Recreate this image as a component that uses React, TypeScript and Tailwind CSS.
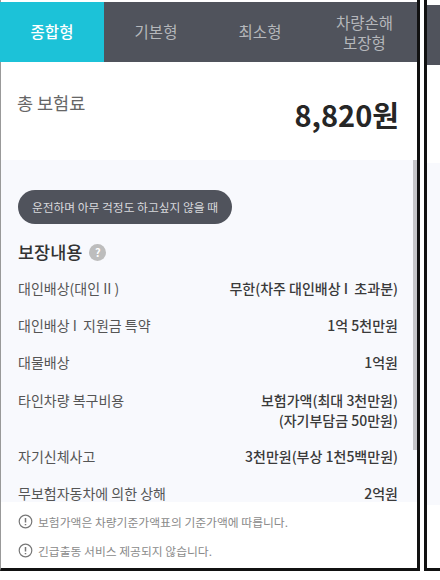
const font = { fontFamily: '"Noto Sans CJK KR", "Noto Sans", sans-serif' };

function Row({ label, value, h = "h-[37px]" }: { label: string; value: React.ReactNode; h?: string }) {
  return (
    <div className={`flex justify-between ${h} text-[14px] leading-[20px] shrink-0`}>
      <span className="text-[#555] whitespace-pre">{label}</span>
      <span className="text-right font-medium text-[#3a3a3a] whitespace-pre">{value}</span>
    </div>
  );
}

function Info({ text }: { text: string }) {
  return (
    <div className="flex items-center gap-[5px] h-[29px] text-[11.8px] text-[#8a8a8a]">
      <svg width="15" height="15" viewBox="0 0 15 15" fill="none" stroke="#777" strokeWidth="1.2">
        <circle cx="7.5" cy="7.5" r="6.3" />
        <path d="M7.5 4v4.6M7.5 10v1.2" strokeWidth="1.5" />
      </svg>
      <span>{text}</span>
    </div>
  );
}

export default function App() {
  return (
    <div className="w-[440px] h-[580px] bg-white overflow-hidden flex" style={font}>
      <div className="w-[420px] h-[571px] shrink-0 border-r-[3px] border-b-[3px] border-[#111] flex flex-col pt-[2px] border-l border-l-[#999]">
        <div className="flex h-[60px] shrink-0 text-[15.5px] text-[#b5b7bb] bg-[#50535c]">
          <div className="w-[104px] -ml-px flex items-center justify-center bg-[#1cc2d8] text-white font-medium">종합형</div>
          <div className="w-[104px] flex items-center justify-center">기본형</div>
          <div className="w-[104px] flex items-center justify-center">최소형</div>
          <div className="flex-1 flex items-center justify-center text-center leading-[20px]">차량손해<br />보장형</div>
        </div>
        <div className="h-[98px] shrink-0 flex justify-between pl-[16px] pr-[18px] pt-[28px]">
          <span className="text-[17.5px] text-[#666] leading-[26px]">총 보험료</span>
          <span className="text-[29px] font-bold text-[#262626] leading-[40px] pt-[4px]">8,820원</span>
        </div>
        <div className="flex-1 min-h-0 bg-[#f8f9fd] overflow-hidden flex relative">
          <div className="flex-1 pl-[17px] pr-[19px] pt-[30px] overflow-hidden">
            <div className="w-[214px] h-[34px] rounded-full bg-[#50535c] text-[#d8d9dc] text-[11.75px] flex items-center justify-center">
              운전하며 아무 걱정도 하고싶지 않을 때
            </div>
            <div className="flex items-center gap-[7px] mt-[13px] h-[30px] text-[17.5px] font-medium text-[#333]">
              보장내용
              <span className="w-[17px] h-[17px] rounded-full bg-[#bdbdbd] text-white text-[11px] font-bold flex items-center justify-center">?</span>
            </div>
            <div className="mt-[11px]">
              <Row label="대인배상(대인 II )" value="무한(차주 대인배상 I  초과분)" />
              <Row label="대인배상 I  지원금 특약" value="1억 5천만원" />
              <Row label="대물배상" value="1억원" h="h-[38px]" />
              <Row label="타인차량 복구비용" value={<>보험가액(최대 3천만원)<br />(자기부담금 50만원)</>} h="h-[56px]" />
              <Row label="자기신체사고" value="3천만원(부상 1천5백만원)" />
              <Row label="무보험자동차에 의한 상해" value="2억원" />
            </div>
          </div>
          <div className="absolute right-0 top-0 w-[4px] h-[290px] bg-[#c4c4c8]" />
        </div>
        <div className="h-[66px] shrink-0 bg-white px-[17px] pt-[5px]">
          <Info text="보험가액은 차량기준가액표의 기준가액에 따릅니다." />
          <Info text="긴급출동 서비스 제공되지 않습니다." />
        </div>
      </div>
      <div className="w-[16px] h-[571px] ml-[4px] shrink-0 border-l-[3px] border-b-[3px] border-[#111] flex flex-col pt-[5px]">
        <div className="h-[60px] bg-[#50535c] shrink-0" />
        <div className="h-[98px] shrink-0" />
        <div className="flex-1 bg-[#f8f9fd]" />
        <div className="h-[63px] shrink-0" />
      </div>
    </div>
  );
}
